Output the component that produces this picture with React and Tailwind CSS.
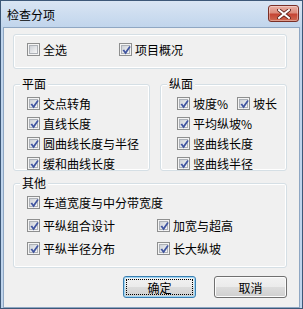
import React from "react";

function CheckBox({ checked }) {
  return (
    <span className="relative flex h-[13px] w-[13px] shrink-0 items-center justify-center border border-[#8e8f8f] bg-[#f4f4f4]">
      <span className="h-[9px] w-[9px] border border-[#aeb2b8] bg-linear-to-br from-[#cdd1d7] to-[#f7f7f7]" />
      {checked && (
        <svg className="absolute left-[1px] top-[1px]" width="11" height="11" viewBox="0 0 11 11">
          <path d="M1.5 5.2 L3.2 4.6 L4.4 6.6 L8.2 1.2 L9.8 1.8 L4.6 9.6 Z" fill="#3f54a0" />
        </svg>
      )}
    </span>
  );
}

function Item({ label, checked = true, className = "" }) {
  return (
    <div className={`flex h-[13px] items-center gap-[3px] ${className}`}>
      <CheckBox checked={checked} />
      <span className="whitespace-nowrap text-[12px] leading-[13px] text-black">{label}</span>
    </div>
  );
}

function Group({ title, className = "", children }) {
  return (
    <div className={`relative rounded-[3px] border border-[#d5dfe5] shadow-[inset_0_0_0_1px_#ffffff] ${className}`}>
      {title && (
        <span className="absolute left-[6px] top-[-8px] bg-[#f0f0f0] px-[2px] text-[12px] leading-[13px] text-black">
          {title}
        </span>
      )}
      {children}
    </div>
  );
}

function Button({ label, primary }) {
  return (
    <button
      className={`relative h-[22px] w-[73px] rounded-[3px] border bg-[linear-gradient(#f2f2f2_0%,#ebebeb_50%,#dddddd_50%,#cfcfcf_100%)] text-[12px] leading-[13px] text-black ${
        primary
          ? "border-[#3c7fb1] shadow-[inset_0_0_0_1px_#9ed6f5]"
          : "border-[#707070] shadow-[inset_0_0_0_1px_#fcfcfc]"
      }`}
    >
      {primary && <span className="absolute inset-[2px] border border-dotted border-black" />}
      <span className="relative">{label}</span>
    </button>
  );
}

export default function App() {
  return (
    <div className="flex h-[309px] w-[303px] flex-col border border-[#3d5878] bg-[#bfd4ec] font-['Noto_Sans_CJK_SC',sans-serif]">
      <div className="flex h-[26px] shrink-0 items-start justify-between bg-linear-to-b from-[#d9e5f3] to-[#c1d5ec]">
        <span className="ml-[6px] mt-[7px] text-[12px] leading-[13px] text-black">检查分项</span>
        <span className="mr-[3px] mt-[4px] flex h-[17px] w-[31px] items-center justify-center rounded-[3px] border border-[#7a2f26] bg-[linear-gradient(#eab0a4_0%,#dc8c7c_45%,#c54534_55%,#cf6a52_100%)] shadow-[inset_0_0_0_1px_rgba(255,255,255,0.35)]">
          <svg width="14" height="10" viewBox="0 0 14 10">
            <path d="M2 1 L12 9 M12 1 L2 9" stroke="#5a1e16" strokeWidth="3.6" strokeLinecap="square" />
            <path d="M2 1 L12 9 M12 1 L2 9" stroke="#ffffff" strokeWidth="2" strokeLinecap="square" />
          </svg>
        </span>
      </div>

      <div className="mx-[2px] flex-1 border border-[#8fa7c3] bg-[#f0f0f0]">
        <Group className="ml-[9px] mt-[6px] h-[35px] w-[274px]">
          <div className="flex pl-[13px] pt-[8px]">
            <Item label="全选" checked={false} className="w-[92px]" />
            <Item label="项目概况" />
          </div>
        </Group>

        <div className="ml-[9px] mt-[15px] flex w-[274px] gap-[10px]">
          <Group title="平面" className="h-[87px] w-[137px]">
            <div className="flex flex-col gap-[7px] pl-[13px] pt-[12px]">
              <Item label="交点转角" />
              <Item label="直线长度" />
              <Item label="圆曲线长度与半径" />
              <Item label="缓和曲线长度" />
            </div>
          </Group>
          <Group title="纵面" className="h-[87px] w-[127px]">
            <div className="flex flex-col gap-[7px] pl-[16px] pt-[12px]">
              <div className="flex">
                <Item label="坡度%" className="w-[60px]" />
                <Item label="坡长" />
              </div>
              <Item label="平均纵坡%" />
              <Item label="竖曲线长度" />
              <Item label="竖曲线半径" />
            </div>
          </Group>
        </div>

        <Group title="其他" className="ml-[9px] mt-[12px] h-[85px] w-[274px]">
          <div className="flex flex-col gap-[10px] pl-[13px] pt-[12px]">
            <Item label="车道宽度与中分带宽度" />
            <div className="flex">
              <Item label="平纵组合设计" className="w-[130px]" />
              <Item label="加宽与超高" />
            </div>
            <div className="flex">
              <Item label="平纵半径分布" className="w-[130px]" />
              <Item label="长大纵坡" />
            </div>
          </div>
        </Group>

        <div className="ml-[9px] mt-[8px] flex w-[274px] justify-end gap-[18px]">
          <Button label="确定" primary />
          <Button label="取消" />
        </div>
      </div>
    </div>
  );
}
